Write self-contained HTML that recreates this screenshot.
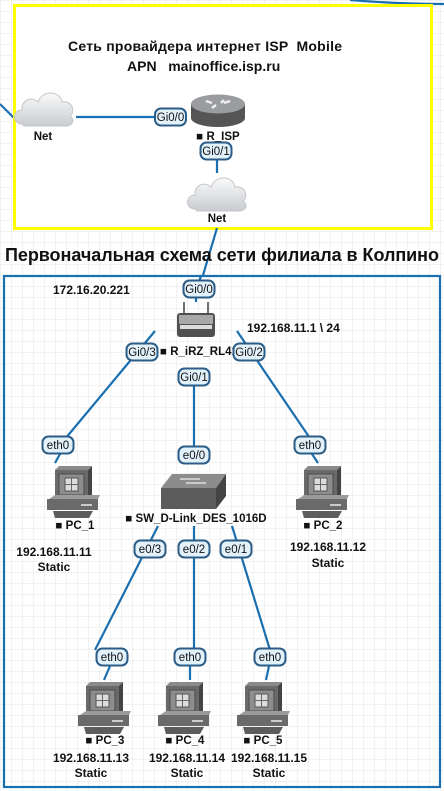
<!DOCTYPE html>
<html><head><meta charset="utf-8"><style>
html,body{margin:0;padding:0;width:444px;height:791px;overflow:hidden;background:#fff}
svg{display:block}
text{font-family:"Liberation Sans","DejaVu Sans",sans-serif;font-weight:bold;fill:#111;white-space:pre}
.lbl rect{fill:#e3f1fb;stroke:#2b5d87;stroke-width:2}
.lbl text{font-size:11.5px;font-weight:normal;fill:#111}
.ln{stroke:#1a6fb0;stroke-width:2.2;fill:none}
</style></head><body>
<svg width="444" height="791" viewBox="0 0 444 791" xmlns="http://www.w3.org/2000/svg">
<defs>
<pattern id="grid" width="11" height="11" patternUnits="userSpaceOnUse">
<path d="M11 0H0V11" fill="none" stroke="#e6e6e6" stroke-width="1"/>
</pattern>
<linearGradient id="cl" x1="0" y1="0" x2="0" y2="1"><stop offset="0" stop-color="#fafafa"/><stop offset="1" stop-color="#c9ccd0"/></linearGradient>
<g id="pc">
<polygon points="10,4 14,0 47,0 43,4" fill="#8a8a8a"/>
<polygon points="43,4 47,0 47,30 43,33" fill="#444"/>
<rect x="10" y="4" width="33" height="29" fill="#6a6a6a"/>
<rect x="14" y="8" width="25" height="21" fill="#8d8d8d" stroke="#4a4a4a" stroke-width="1"/>
<rect x="20" y="12" width="13" height="13" fill="#ddd" stroke="#555"/>
<path d="M26.5 12V25M20 18.5H33" stroke="#666" stroke-width="1"/>
<polygon points="4,33 10,29 55,29 53,33" fill="#9a9a9a"/>
<rect x="2" y="33" width="51" height="11" fill="#6a6a6a"/>
<rect x="36" y="38" width="11" height="2" fill="#ccc"/>
<polygon points="8,45 48,45 44,52 10,52" fill="#5c5c5c"/>
</g>
<g id="cloud">
<path d="M8 34 C-2 34 -2 20 8 20 C7 10 18 6 24 12 C28 0 46 0 48 12 C58 10 62 22 56 26 C62 30 58 36 52 36 L10 36 Z" fill="url(#cl)" stroke="#c4c6c9" stroke-width="1"/>
</g>
</defs>
<rect width="444" height="791" fill="url(#grid)"/>

<path class="ln" d="M350 0 Q400 4 444 4"/>
<path class="ln" d="M0 104 L14 118"/>

<rect x="14.5" y="5.5" width="417" height="223" fill="#fff" stroke="#ffff00" stroke-width="3"/>
<text x="68" y="51" font-size="14" textLength="274">Сеть провайдера интернет ISP  Mobile</text>
<text x="127" y="71" font-size="14">APN   mainoffice.isp.ru</text>

<use href="#cloud" x="14" y="90"/>
<text x="43" y="140" font-size="11.5" text-anchor="middle" fill="#333">Net</text>
<path class="ln" d="M76 117 H156"/>
<g class="lbl"><rect x="155" y="108.5" width="31" height="17" rx="6"/><text x="170.5" y="121" text-anchor="middle">Gi0/0</text></g>

<ellipse cx="218" cy="118" rx="27" ry="9" fill="#555"/>
<rect x="191" y="104" width="54" height="14" fill="#555"/>
<ellipse cx="218" cy="104" rx="27" ry="9.5" fill="#9a9c9f"/>
<path d="M206 101 l6 2 M230 101 l-6 2 M212 108 l4 -3 M224 100 l-3 3" stroke="#eee" stroke-width="2.5"/>
<text x="218" y="140" font-size="11.5" text-anchor="middle" fill="#222">■ R_ISP</text>
<g class="lbl"><rect x="200.5" y="142.5" width="31" height="17" rx="6"/><text x="216" y="155" text-anchor="middle">Gi0/1</text></g>
<path class="ln" d="M217 160 V173"/>
<use href="#cloud" x="187" y="175"/>
<text x="217" y="222" font-size="11.5" text-anchor="middle" fill="#333">Net</text>
<path class="ln" d="M217 228 L201 282"/>

<text x="5" y="261" font-size="18" textLength="434">Первоначальная схема сети филиала в Колпино</text>

<rect x="4" y="276" width="436" height="511" fill="#fff" stroke="#1a6fb0" stroke-width="2.2"/>
<rect x="5" y="277" width="434" height="509" fill="url(#grid)"/>
<path class="ln" d="M201 276 L199 282"/>

<text x="53" y="294" font-size="12">172.16.20.221</text>
<text x="247" y="332" font-size="12">192.168.11.1 \ 24</text>

<path class="ln" d="M155 331 L60 445"/>
<path class="ln" d="M237 331 L318 450"/>
<path class="ln" d="M196 297 V302"/>
<path class="ln" d="M194 370 V447"/>
<path class="ln" d="M158 526 L95 650"/>
<path class="ln" d="M194 526 V650"/>
<path class="ln" d="M232 526 L270 650"/>
<path class="ln" d="M60 454 L55 463"/>
<path class="ln" d="M312 454 L318 463"/>

<g class="lbl"><rect x="183.5" y="280.5" width="31" height="17" rx="6"/><text x="199" y="293" text-anchor="middle">Gi0/0</text></g>

<path d="M184 302 V316 M208 302 V316" stroke="#444" stroke-width="1.5"/>
<rect x="177" y="313" width="38" height="24" rx="3" fill="#505050"/>
<rect x="179" y="315" width="34" height="9" fill="#a8a8a8"/>
<rect x="180" y="325" width="32" height="4" fill="#ddd"/>
<text x="199" y="355" font-size="11.5" text-anchor="middle" fill="#222">■ R_iRZ_RL41</text>

<g class="lbl"><rect x="126.5" y="343.5" width="31" height="17" rx="6"/><text x="142" y="356" text-anchor="middle">Gi0/3</text></g>
<g class="lbl"><rect x="233.5" y="343.5" width="31" height="17" rx="6"/><text x="249" y="356" text-anchor="middle">Gi0/2</text></g>
<g class="lbl"><rect x="178.5" y="368.5" width="31" height="17" rx="6"/><text x="194" y="381" text-anchor="middle">Gi0/1</text></g>
<g class="lbl"><rect x="178.5" y="446.5" width="31" height="17" rx="6"/><text x="194" y="459" text-anchor="middle">e0/0</text></g>
<g class="lbl"><rect x="42.5" y="436.5" width="31" height="17" rx="6"/><text x="58" y="449" text-anchor="middle">eth0</text></g>
<g class="lbl"><rect x="294.5" y="436.5" width="31" height="17" rx="6"/><text x="310" y="449" text-anchor="middle">eth0</text></g>

<polygon points="172,474 226,474 216,488 161,488" fill="#8c8c8c"/>
<rect x="161" y="488" width="55" height="21" fill="#5c5c5c"/>
<polygon points="216,488 226,474 226,496 216,509" fill="#444"/>
<path d="M180 479 H200 M186 483 H206" stroke="#eee" stroke-width="1.3"/>
<text x="196" y="522" font-size="11.5" text-anchor="middle" fill="#222">■ SW_D-Link_DES_1016D</text>

<use href="#pc" x="45" y="466"/>
<text x="75" y="529" font-size="11.5" text-anchor="middle" fill="#222">■ PC_1</text>
<text x="54" y="556" font-size="12" text-anchor="middle">192.168.11.11</text>
<text x="54" y="571" font-size="12" text-anchor="middle">Static</text>
<use href="#pc" x="294" y="466"/>
<text x="323" y="529" font-size="11.5" text-anchor="middle" fill="#222">■ PC_2</text>
<text x="328" y="551" font-size="12" text-anchor="middle">192.168.11.12</text>
<text x="328" y="567" font-size="12" text-anchor="middle">Static</text>

<g class="lbl"><rect x="134.5" y="540.5" width="31" height="17" rx="6"/><text x="150" y="553" text-anchor="middle">e0/3</text></g>
<g class="lbl"><rect x="178.5" y="540.5" width="31" height="17" rx="6"/><text x="194" y="553" text-anchor="middle">e0/2</text></g>
<g class="lbl"><rect x="220.5" y="540.5" width="31" height="17" rx="6"/><text x="236" y="553" text-anchor="middle">e0/1</text></g>

<path class="ln" d="M110 666 L104 680 M190 666 V680 M269 666 L266 680"/>
<g class="lbl"><rect x="96.5" y="648.5" width="31" height="17" rx="6"/><text x="112" y="661" text-anchor="middle">eth0</text></g>
<g class="lbl"><rect x="174.5" y="648.5" width="31" height="17" rx="6"/><text x="190" y="661" text-anchor="middle">eth0</text></g>
<g class="lbl"><rect x="254.5" y="648.5" width="31" height="17" rx="6"/><text x="270" y="661" text-anchor="middle">eth0</text></g>

<use href="#pc" x="76" y="682"/>
<text x="105" y="744" font-size="11.5" text-anchor="middle" fill="#222">■ PC_3</text>
<text x="91" y="762" font-size="12" text-anchor="middle">192.168.11.13</text>
<text x="91" y="777" font-size="12" text-anchor="middle">Static</text>
<use href="#pc" x="156" y="682"/>
<text x="185" y="744" font-size="11.5" text-anchor="middle" fill="#222">■ PC_4</text>
<text x="187" y="762" font-size="12" text-anchor="middle">192.168.11.14</text>
<text x="187" y="777" font-size="12" text-anchor="middle">Static</text>
<use href="#pc" x="235" y="682"/>
<text x="263" y="744" font-size="11.5" text-anchor="middle" fill="#222">■ PC_5</text>
<text x="269" y="762" font-size="12" text-anchor="middle">192.168.11.15</text>
<text x="269" y="777" font-size="12" text-anchor="middle">Static</text>
</svg>
</body></html>
